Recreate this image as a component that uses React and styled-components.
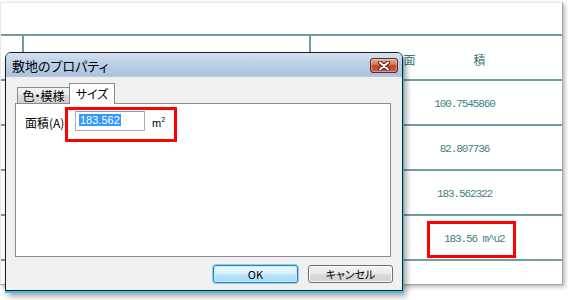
import React from 'react';
import styled, { createGlobalStyle } from 'styled-components';

const GlobalStyle = createGlobalStyle`
  html, body {
    margin: 0;
    padding: 0;
    background: #fff;
  }
  body {
    width: 568px;
    height: 300px;
    overflow: hidden;
    font-family: "Noto Sans CJK JP", sans-serif;
  }
`;

// background sheet with the area table
const Page = styled.div`
  position: relative;
  width: 568px;
  height: 300px;
  padding: 2px 5px 15px 0;
  box-sizing: border-box;
`;

const Sheet = styled.div`
  height: 100%;
  background: #fff;
  border: 1px solid #e8e8e8;
  border-right-color: #a4a4a4;
  border-bottom-color: #a4a4a4;
  box-shadow: 2px 2px 4px rgba(0, 0, 0, 0.28);
  box-sizing: border-box;
  display: flex;
  flex-direction: column;
`;

const Row = styled.div`
  display: grid;
  grid-template-columns: 23px 287px 1fr;
  height: ${p => p.h}px;
  flex: ${p => (p.h ? 'none' : '1')};
  border-bottom: ${p => (p.last ? 'none' : '2px solid #6f9d9d')};
  box-sizing: border-box;
`;

const Cell = styled.div`
  border-right: ${p => (p.divider ? '2px solid #6f9d9d' : 'none')};
`;

const HeadCell = styled.div`
  display: flex;
  justify-content: center;
  align-items: center;
  gap: 58px;
  padding: 4px 0 0 16px;
  font-size: 12px;
  color: #3c7878;
`;

const ValueCell = styled.div`
  display: flex;
  justify-content: center;
  align-items: center;
  padding: 3px 0 0 56px;
  font-family: "Liberation Mono", monospace;
  font-size: 11px;
  letter-spacing: -1.1px;
  color: #3f7f7f;
  white-space: pre;
`;

const Marked = styled.span`
  display: flex;
  align-items: center;
  width: 89px;
  height: 37px;
  box-sizing: border-box;
  margin: 0 0 0 14px;
  padding-left: 14px;
  border: 3px solid #f00;
`;

// dialog window
const Dialog = styled.div`
  position: absolute;
  left: 5px;
  top: 52px;
  width: 398px;
  height: 239px;
  box-sizing: border-box;
  border: 1px solid #1e1e1e;
  border-radius: 6px 6px 0 0;
  background: #f0f0f0;
  box-shadow: 0 2px 0 #3cc3ec, 1px 2px 0 #3cc3ec, 3px 5px 6px rgba(0, 0, 0, 0.4);
  display: flex;
  flex-direction: column;
  font-feature-settings: "palt";
`;

const TitleBar = styled.div`
  height: 24px;
  display: flex;
  justify-content: space-between;
  padding: 0 4px 0 6px;
  border-radius: 5px 5px 0 0;
  background: linear-gradient(#d3e1f1, #bcd0e8 45%, #abc2df);
  border-bottom: 1px solid #b9c9dc;
`;

const Title = styled.span`
  align-self: center;
  font-size: 13px;
  color: #000;
  padding-top: 1px;
`;

const CloseButton = styled.div`
  width: 28px;
  height: 15px;
  margin-top: 5px;
  box-sizing: border-box;
  border: 1px solid #6b2318;
  border-radius: 3px;
  background: linear-gradient(#eaa592 0%, #d5765f 45%, #c1462f 50%, #cb5e43 100%);
  box-shadow: inset 0 0 0 1px rgba(255, 255, 255, 0.35);
  display: flex;
  justify-content: center;
  align-items: center;
`;

const Body = styled.div`
  flex: 1;
  display: flex;
  flex-direction: column;
  padding: 6px 9px 7px 9px;
`;

const TabRow = styled.div`
  display: flex;
  align-items: flex-end;
  height: 21px;
  padding-left: 2px;
  margin-bottom: -1px;
  position: relative;
  z-index: 1;
`;

const Tab = styled.div`
  height: ${p => (p.active ? 21 : 17)}px;
  width: ${p => p.w}px;
  box-sizing: border-box;
  border: 1px solid #898c95;
  border-bottom: ${p => (p.active ? 'none' : '1px solid #898c95')};
  border-right: ${p => (p.active ? '1px solid #898c95' : 'none')};
  background: ${p => (p.active ? '#fff' : 'linear-gradient(#f3f3f3, #ebebeb 50%, #dddddd 50%, #cfcfcf)')};
  font-size: 12px;
  color: #000;
  display: flex;
  justify-content: center;
  align-items: center;
  padding-bottom: ${p => (p.active ? 2 : 0)}px;
`;

const Panel = styled.div`
  height: 154px;
  margin-right: 2px;
  box-sizing: border-box;
  background: #fff;
  border: 1px solid #898c95;
  padding: 3px 0 0 9px;
`;

const FieldRow = styled.div`
  display: flex;
  align-items: flex-start;
`;

const Label = styled.span`
  width: 40px;
  margin-top: 8px;
  line-height: 16px;
  font-size: 12px;
  color: #000;
  white-space: nowrap;
`;

const Highlight = styled.div`
  display: flex;
  align-items: center;
  gap: 7px;
  padding: 1px 9px 8px 7px;
  border: 3px solid #f00;
  background: #fff;
`;

const TextBox = styled.div`
  width: 70px;
  height: 20px;
  box-sizing: border-box;
  border: 1px solid #abadb3;
  border-top-color: #8e9aa9;
  background: #fff;
  padding: 2px 0 0 3px;
  font-family: "Liberation Sans", sans-serif;
  font-size: 11px;
  line-height: 13px;
`;

const Selected = styled.span`
  background: #3399ff;
  color: #fff;
  padding: 0 1px;
`;

const Unit = styled.span`
  font-family: "Liberation Sans", sans-serif;
  font-size: 11px;
  color: #000;
  margin-top: 3px;
`;

const ButtonRow = styled.div`
  display: flex;
  justify-content: flex-end;
  gap: 10px;
  margin-top: 8px;
`;

const Button = styled.div`
  width: 85px;
  height: 18px;
  box-sizing: border-box;
  border-radius: 3px;
  border: 1px solid ${p => (p.primary ? '#3c7fb1' : '#707070')};
  background: ${p =>
    p.primary
      ? 'linear-gradient(#eaf6fd, #d9f0fc 50%, #bee6fd 50%, #a7d9f5)'
      : 'linear-gradient(#f2f2f2, #ebebeb 50%, #dddddd 50%, #cfcfcf)'};
  box-shadow: ${p => (p.primary ? '0 0 0 1px #7fd2f2, inset 0 0 0 1px #bfe8fa' : 'inset 0 0 0 1px #fcfcfc')};
  display: flex;
  justify-content: center;
  align-items: center;
  font-size: 11px;
  color: #000;
`;

const rows = [
  { value: '100.7545860' },
  { value: '82.807736' },
  { value: '183.562322' },
  { value: '183.56 m^u2', marked: true }
];

const CloseIcon = () => (
  <svg width="14" height="10" viewBox="0 0 14 10">
    <path d="M3 1.5 L11 8.5 M11 1.5 L3 8.5" stroke="#4a130a" strokeWidth="4" strokeLinecap="round" />
    <path d="M3 1.5 L11 8.5 M11 1.5 L3 8.5" stroke="#fff" strokeWidth="2.2" strokeLinecap="round" />
  </svg>
);

export default function App() {
  return (
    <Page>
      <GlobalStyle />
      <Sheet>
        <Row h={33} />
        <Row h={45}>
          <Cell divider />
          <Cell divider />
          <HeadCell>
            <span>面</span>
            <span>積</span>
          </HeadCell>
        </Row>
        {rows.map((item, id) => (
          <Row h={45} key={id}>
            <Cell />
            <Cell />
            <ValueCell>{item.marked ? <Marked>{item.value}</Marked> : item.value}</ValueCell>
          </Row>
        ))}
        <Row last />
      </Sheet>

      <Dialog>
        <TitleBar>
          <Title>敷地のプロパティ</Title>
          <CloseButton>
            <CloseIcon />
          </CloseButton>
        </TitleBar>
        <Body>
          <TabRow>
            <Tab w={52}>色・模様</Tab>
            <Tab w={46} active>
              サイズ
            </Tab>
          </TabRow>
          <Panel>
            <FieldRow>
              <Label>面積(A)</Label>
              <Highlight>
                <TextBox>
                  <Selected>183.562</Selected>
                </TextBox>
                <Unit>
                  m<sup style={{ fontSize: '7px' }}>2</sup>
                </Unit>
              </Highlight>
            </FieldRow>
          </Panel>
          <ButtonRow>
            <Button primary>OK</Button>
            <Button>キャンセル</Button>
          </ButtonRow>
        </Body>
      </Dialog>
    </Page>
  );
}
